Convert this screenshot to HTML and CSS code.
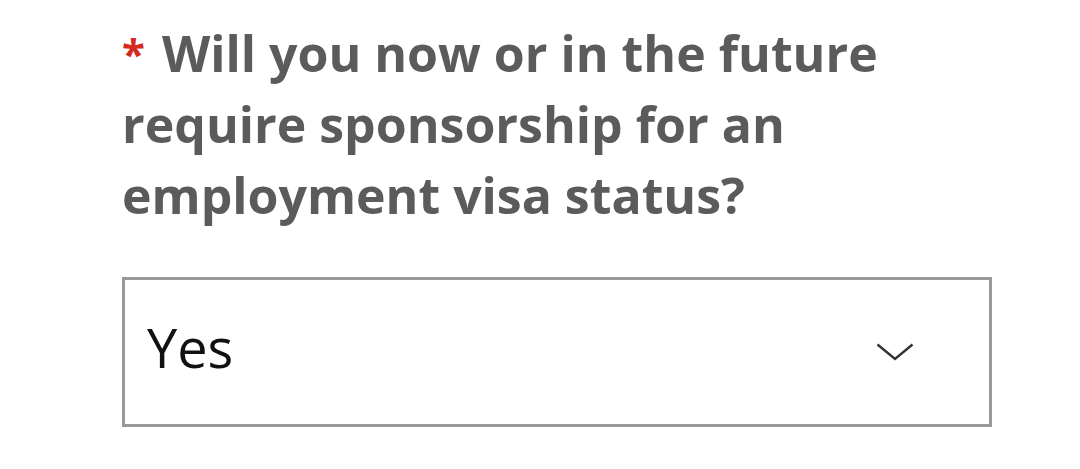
FILE: index.html
```html
<!DOCTYPE html>
<html lang="en">
<head>
<meta charset="utf-8">
<title>Sponsorship question</title>
<link rel="stylesheet" href="styles.css">
</head>
<body>
<div class="field">
  <label class="label" for="sponsor"><span class="req">*</span> Will you now or in the future require sponsorship for an employment visa status?</label>
  <div class="select" id="sponsor">
    <span class="value">Yes</span>
    <svg class="chev" width="38" height="18" viewBox="0 0 38 18" aria-hidden="true">
      <polyline points="1.5,1.5 19,16 36.5,1.5" fill="none" stroke="#333" stroke-width="2.4" stroke-linejoin="miter"/>
    </svg>
  </div>
</div>
</body>
</html>
```
FILE: styles.css
```css
html, body {
  margin: 0;
  padding: 0;
  background: #ffffff;
}
.field {
  padding: 17px 0 0 122px;
  width: 870px;
  display: flex;
  flex-direction: column;
}
.label {
  font-family: "Open Sans", "Liberation Sans", sans-serif;
  font-weight: 700;
  font-size: 50px;
  line-height: 71px;
  color: #5b5b5b;
  width: 800px;
}
.req {
  color: #d42a1f;
  font-size: 42px;
  vertical-align: 3px;
  margin-right: 4px;
}
.select {
  margin-top: 46px;
  box-sizing: border-box;
  width: 870px;
  height: 150px;
  border: 3px solid #979a9c;
  display: flex;
  align-items: center;
  justify-content: space-between;
  padding: 0 75px 0 22px;
}
.value {
  font-family: "Open Sans", "Liberation Sans", sans-serif;
  font-size: 54px;
  line-height: 1;
  color: #111111;
  margin-bottom: 10px;
}
.chev {
  display: block;
}
```
